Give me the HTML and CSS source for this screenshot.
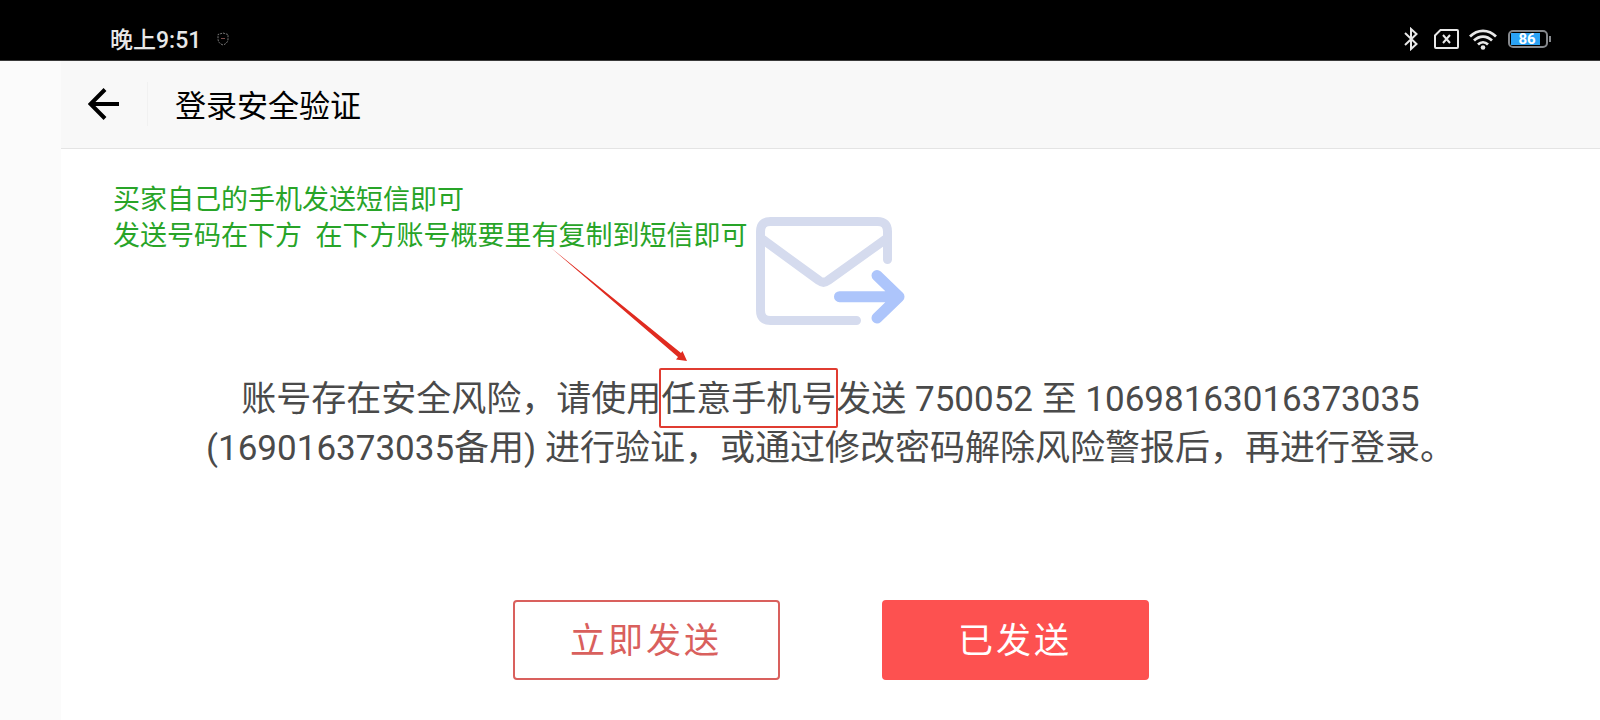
FILE: index.html
```
<!DOCTYPE html>
<html lang="zh-CN">
<head>
  <meta charset="UTF-8">
  <meta name="viewport" content="width=device-width, initial-scale=1.0">
  <title>登录安全验证</title>
  <link rel="stylesheet" href="styles.css">
</head>
<body>
  <div class="status-bar">
    <div class="status-left">
      <span class="time">晚上9:51</span>
      <svg class="shield" width="12" height="14" viewBox="0 0 12 14" fill="none">
        <path d="M6 1 L11 2.5 V7 C11 10 9 12 6 13 C3 12 1 10 1 7 V2.5 Z" stroke="#777" stroke-dasharray="2 1"/>
        <path d="M4 6.5 H8" stroke="#7a4a4a"/>
      </svg>
    </div>
    <div class="status-right">
      <svg width="14" height="24" viewBox="0 0 14 24" fill="none" stroke="#e8e8e8" stroke-width="2">
        <path d="M1 6 L12.500 17 L7 22 V2 L12.500 7 L1 18"/>
      </svg>
      <svg class="sim" width="25" height="20" viewBox="0 0 25 20" fill="none" stroke="#e8e8e8" stroke-width="2">
        <path d="M6.500 1 H23 Q24 1 24 2 V18 Q24 19 23 19 H2 Q1 19 1 18 V6.500 Z"/>
        <path d="M9 6 L16 14 M16 6 L9 14"/>
      </svg>
      <svg class="wifi" width="28" height="21" viewBox="0 0 28 21" fill="none" stroke="#e8e8e8" stroke-width="2.700">
        <path d="M1 7.500 C8.500 0 19.500 0 27 7.500"/>
        <path d="M5 11.500 C10.300 6.200 17.700 6.200 23 11.500"/>
        <path d="M9 15.500 C12 12.600 16 12.600 19 15.500"/>
        <circle cx="14" cy="18.500" r="2.300" fill="#e8e8e8" stroke="none"/>
      </svg>
      <div class="battery"><span class="level">86</span></div>
    </div>
  </div>

  <div class="page">
    <header class="header">
      <a class="back" href="#" aria-label="返回">
        <svg width="32" height="32" viewBox="0 0 32 32" fill="none" stroke="#000" stroke-width="4">
          <path d="M17 1.500 L2.500 16 L17 30.500"/>
          <path d="M2.500 16 H31"/>
        </svg>
      </a>
      <h1>登录安全验证</h1>
    </header>

    <main class="content">
      <svg class="mail" width="150" height="108" viewBox="0 0 150 108" fill="none" stroke-linecap="round" stroke-linejoin="round">
        <g stroke="#d5dbee" stroke-width="9">
          <path d="M131.500 42.500 V14.500 Q131.500 4.500 121.500 4.500 H14.500 Q4.500 4.500 4.500 14.500 V93.500 Q4.500 103.500 14.500 103.500 H100.500"/>
          <path d="M6 22 L63 63.500 Q67.500 67 72 63.500 L130 22"/>
        </g>
        <path d="M83.500 79.700 H143 M121 58.500 L143 79.700 L121 101" stroke="#adc5fb" stroke-width="11"/>
      </svg>

      <p class="message">账号存在安全风险，请使用<span class="marked">任意手机号</span>发送 750052 至 10698163016373035<br>(169016373035备用) 进行验证，或通过修改密码解除风险警报后，再进行登录。</p>

      <div class="buttons">
        <button type="button" class="btn">立即发送</button>
        <button type="button" class="btn btn-primary">已发送</button>
      </div>

      <p class="note">买家自己的手机发送短信即可<br>发送号码在下方&nbsp; 在下方账号概要里有复制到短信即可</p>
      <svg class="arrow" width="138" height="116" viewBox="0 0 138 116" fill="#e02b20">
        <path d="M0 0 L131 106 L132.500 104 L137 114 L126 112.500 L128 110 Z"/>
      </svg>
    </main>
  </div>
</body>
</html>
```
FILE: styles.css
```
* {
  box-sizing: border-box;
}
body {
  margin: 0;
  min-height: 100vh;
  display: flex;
  flex-direction: column;
  font-family: Roboto, "Noto Sans CJK SC", sans-serif;
  background: #fbfbfb;
}
h1, p {
  margin: 0;
}

/* status bar */
.status-bar {
  display: flex;
  justify-content: space-between;
  height: 61px;
  padding: 18px 48px 0 110px;
  background: #000;
  border-bottom: 1px solid #3a3a3a;
  color: #e8e8e8;
}
.status-left, .status-right {
  display: flex;
  align-items: center;
  height: 42px;
}
.status-left {
  gap: 16px;
}
.time {
  padding-bottom: 2px;
  font-size: 23px;
  font-weight: 500;
}
.sim {
  margin-left: 16px;
}
.wifi {
  margin: 0 11px 0 10px;
}
.battery {
  position: relative;
  width: 40px;
  height: 18px;
  margin-right: 4px;
  padding: 1px;
  border: 2px solid #85888c;
  border-radius: 5px;
}
.battery::after {
  content: "";
  position: absolute;
  top: 4px;
  right: -5px;
  width: 2px;
  height: 6px;
  background: #85888c;
}
.level {
  display: block;
  width: 86%;
  height: 12px;
  padding-left: 3px;
  background: #2ba3f5;
  color: #fff;
  font-size: 15px;
  font-weight: 700;
  line-height: 12px;
  text-align: center;
}

/* page */
.page {
  flex: 1;
  display: flex;
  flex-direction: column;
  margin-left: 61px;
  background: #fff;
}
.header {
  display: flex;
  align-items: center;
  height: 88px;
  padding-bottom: 2px;
  background: #f8f8f8;
  border-bottom: 1px solid #e4e4e4;
}
.back {
  display: flex;
  padding: 6px 27px;
  border-right: 1px solid #f1f1f1;
}
h1 {
  margin-left: 27px;
  font-size: 31px;
  font-weight: 400;
  color: #000;
}
.content {
  position: relative;
  flex: 1;
  display: flex;
  flex-direction: column;
  align-items: center;
  padding-top: 68px;
}
.message {
  margin-top: 50px;
  font-size: 35px;
  line-height: 49px;
  text-align: center;
  color: #4a4a4a;
}
.marked {
  position: relative;
}
.marked::after {
  content: "";
  position: absolute;
  inset: -11px -2px -8px;
  border: 2px solid #e03c31;
  border-radius: 2px;
}
.buttons {
  display: flex;
  gap: 102px;
  margin-top: 127px;
}
.btn {
  width: 267px;
  height: 80px;
  padding: 0 0 6px;
  border: 2px solid #d9605d;
  border-radius: 4px;
  background: #fff;
  color: #d9605d;
  font-family: inherit;
  font-size: 35px;
  letter-spacing: 3px;
}
.btn-primary {
  border-color: #fd5150;
  background: #fd5150;
  color: #fff;
}

/* notes over the page */
.note {
  position: absolute;
  top: 33px;
  left: 52px;
  font-size: 27px;
  line-height: 36px;
  color: #28a428;
}
.arrow {
  position: absolute;
  top: 98px;
  left: 489px;
}
```
